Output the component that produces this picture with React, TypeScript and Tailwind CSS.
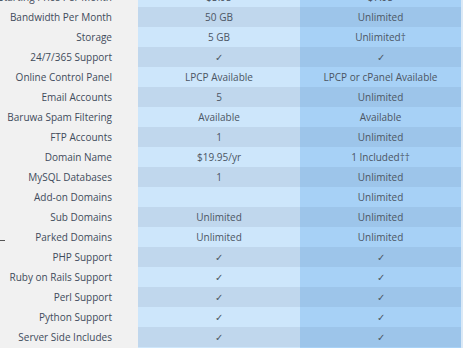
import React from 'react';

const rows: [string, string, string][] = [
  ['Starting Price Per Month', '$3.95', '$7.95'],
  ['Bandwidth Per Month', '50 GB', 'Unlimited'],
  ['Storage', '5 GB', 'Unlimited†'],
  ['24/7/365 Support', '✓', '✓'],
  ['Online Control Panel', 'LPCP Available', 'LPCP or cPanel Available'],
  ['Email Accounts', '5', 'Unlimited'],
  ['Baruwa Spam Filtering', 'Available', 'Available'],
  ['FTP Accounts', '1', 'Unlimited'],
  ['Domain Name', '$19.95/yr', '1 Included††'],
  ['MySQL Databases', '1', 'Unlimited'],
  ['Add-on Domains', '', 'Unlimited'],
  ['Sub Domains', 'Unlimited', 'Unlimited'],
  ['Parked Domains', 'Unlimited', 'Unlimited'],
  ['PHP Support', '✓', '✓'],
  ['Ruby on Rails Support', '✓', '✓'],
  ['Perl Support', '✓', '✓'],
  ['Python Support', '✓', '✓'],
  ['Server Side Includes', '✓', '✓'],
  ['SSL Support', '✓', '✓'],
];

const App: React.FC = () => {
  return (
    <div className="w-[463px] h-[348px] overflow-hidden bg-[#f1f1f1] text-[10px] text-[#4b5563] whitespace-nowrap" style={{ fontFamily: '"Open Sans", sans-serif' }}>
      <div className="-mt-[13px] flex">
        <div className="w-[461px]">
          {rows.map(([label, basic, pro], i) => {
            const dark = i % 2 === 1;
            return (
              <div key={label} className="flex h-[20px] items-center">
                <div className="relative w-[138px] h-full flex items-center justify-end pr-[26px] bg-[#f1f1f1] text-[#3f4b5b]">
                  {label === 'Parked Domains' && (
                    <span className="absolute left-0 top-[13px] w-[5px] h-px bg-[#555]" />
                  )}
                  {label}
                </div>
                <div className={`w-[162px] h-full flex items-center justify-center ${dark ? 'bg-[#c0d7ed]' : 'bg-[#cde6fb]'}`}>
                  {basic}
                </div>
                <div className={`w-[161px] h-full flex items-center justify-center ${dark ? 'bg-[#9dc5ea]' : 'bg-[#a7d1f6]'}`}>
                  {pro}
                </div>
              </div>
            );
          })}
        </div>
        <div className="w-[2px] bg-[#dbe9f6]" />
      </div>
    </div>
  );
};

export default App;
